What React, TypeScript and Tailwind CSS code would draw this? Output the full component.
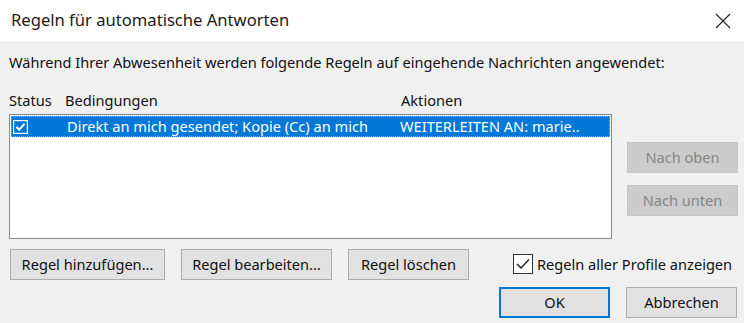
import React from 'react';

const font = { fontFamily: '"Noto Sans", "Open Sans", sans-serif' };

function DialogButton({ label, width, disabled, primary }: { label: string; width: string; disabled?: boolean; primary?: boolean }) {
  const base = 'h-[31px] flex items-center justify-center text-[14.6px] leading-none';
  if (disabled) {
    return <div className={`${base} ${width} bg-[#cccccc] border border-[#c4c4c4] text-[#858585]`}>{label}</div>;
  }
  if (primary) {
    return <div className={`${base} ${width} bg-[#e1e1e1] border-2 border-[#0078d7] text-[#111]`}>{label}</div>;
  }
  return <div className={`${base} ${width} bg-[#e1e1e1] border border-[#adadad] text-[#111]`}>{label}</div>;
}

export default function App() {
  return (
    <div className="w-[744px] h-[323px] bg-[#f0f0f0] text-[#111] overflow-hidden" style={font}>
      {/* Title bar */}
      <div className="h-[41px] bg-white flex items-center justify-between pl-[11px] pr-[13px]">
        <span className="text-[16.6px] text-[#1a1a1a]">Regeln für automatische Antworten</span>
        <svg width="16" height="16" viewBox="0 0 16 16">
          <path d="M1 1 L15 15 M15 1 L1 15" stroke="#222" strokeWidth="1.1" fill="none" />
        </svg>
      </div>

      <div className="pl-[9px] pr-[6px]">
        <p className="mt-[11px] text-[14.6px] leading-[20px]">
          Während Ihrer Abwesenheit werden folgende Regeln auf eingehende Nachrichten angewendet:
        </p>

        {/* Column headers */}
        <div className="mt-[18px] flex text-[14.6px] leading-[20px]">
          <span className="w-[56px]">Status</span>
          <span className="w-[336px]">Bedingungen</span>
          <span>Aktionen</span>
        </div>

        <div className="mt-[4px] flex">
          {/* Rules list */}
          <div className="w-[603px] h-[125px] bg-white border border-[#828790] p-[1px]">
            <div className="h-[21px] flex items-center bg-[#0078d7] text-white text-[14.6px] border border-dotted border-[#e8a050]">
              <div className="w-[55px] pl-[1px] flex items-center">
                <svg width="15" height="14" viewBox="0 0 15 14">
                  <rect x="0.5" y="0.5" width="14" height="13" fill="#0078d7" stroke="white" strokeWidth="1.4" />
                  <path d="M3.5 7 L6.2 9.7 L11.5 3.8" stroke="white" strokeWidth="2" fill="none" />
                </svg>
              </div>
              <span className="w-[333px]">Direkt an mich gesendet; Kopie (Cc) an mich</span>
              <span>WEITERLEITEN AN: marie..</span>
            </div>
          </div>

          {/* Move buttons */}
          <div className="ml-[15px] mt-[28px] flex flex-col gap-[12px]">
            <DialogButton label="Nach oben" width="w-[111px]" disabled />
            <DialogButton label="Nach unten" width="w-[111px]" disabled />
          </div>
        </div>

        {/* Bottom actions */}
        <div className="mt-[10px] flex items-center">
          <div className="ml-[1px] flex gap-[16px]">
            <DialogButton label="Regel hinzufügen..." width="w-[155px]" />
            <DialogButton label="Regel bearbeiten..." width="w-[151px]" />
            <DialogButton label="Regel löschen" width="w-[121px]" />
          </div>
          <div className="ml-[44px] flex items-center gap-[4px] text-[14.6px]">
            <div className="w-[20px] h-[20px] bg-white border border-[#333] flex items-center justify-center">
              <svg width="14" height="12" viewBox="0 0 14 12">
                <path d="M1 6 L5 10 L13 1.5" stroke="#222" strokeWidth="1.5" fill="none" />
              </svg>
            </div>
            <span>Regeln aller Profile anzeigen</span>
          </div>
        </div>

        <div className="mt-[7px] flex justify-end gap-[16px] pr-[1px]">
          <DialogButton label="OK" width="w-[111px]" primary />
          <DialogButton label="Abbrechen" width="w-[111px]" />
        </div>
      </div>
    </div>
  );
}
